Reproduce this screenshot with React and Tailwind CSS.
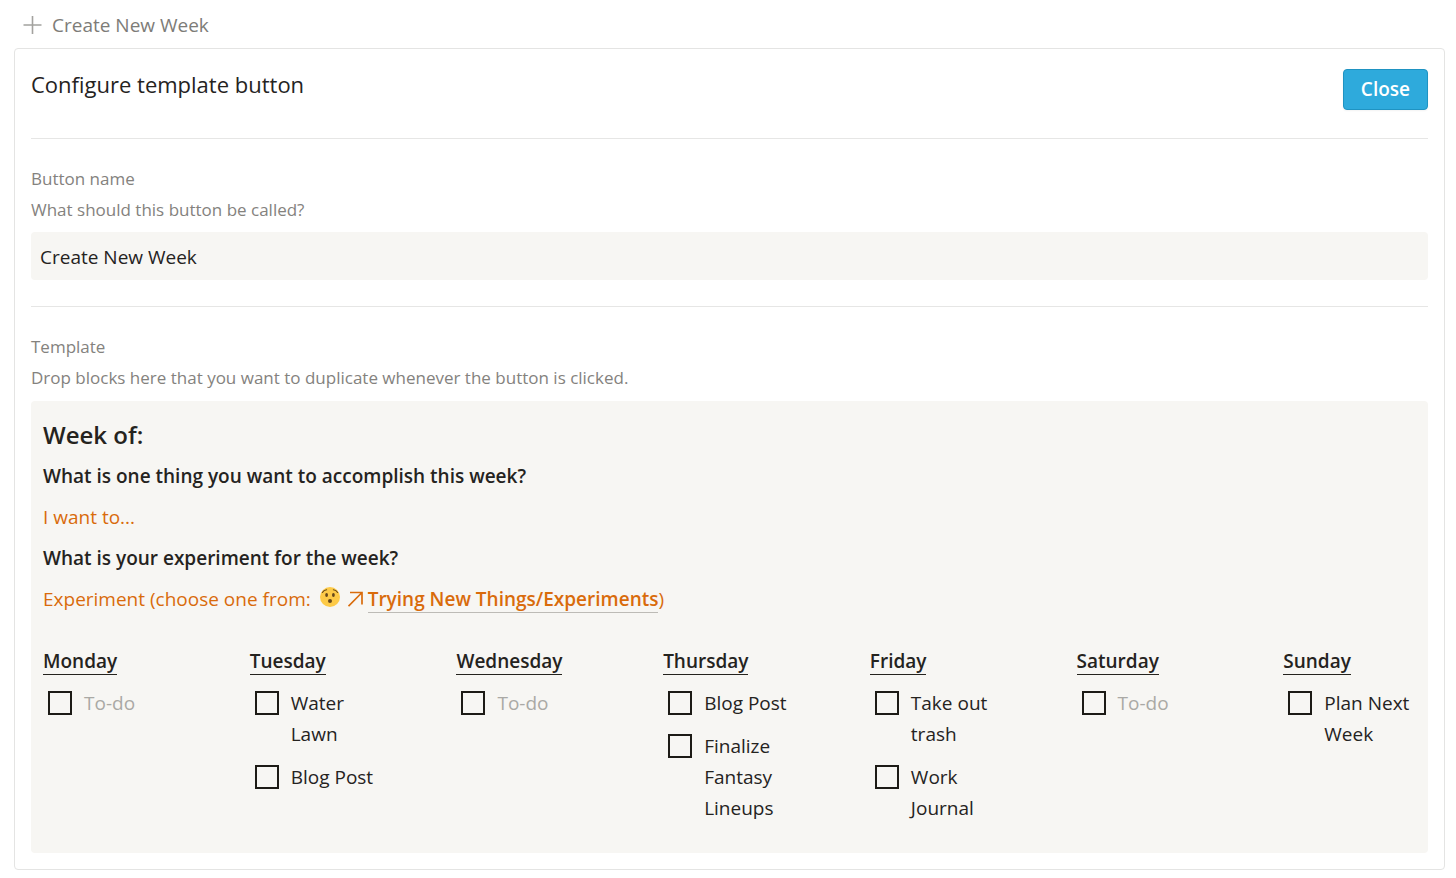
import { useState } from "react";

const days = [
  { name: "Monday", tasks: [""] },
  { name: "Tuesday", tasks: ["Water Lawn", "Blog Post"] },
  { name: "Wednesday", tasks: [""] },
  { name: "Thursday", tasks: ["Blog Post", "Finalize Fantasy Lineups"] },
  { name: "Friday", tasks: ["Take out trash", "Work Journal"] },
  { name: "Saturday", tasks: [""] },
  { name: "Sunday", tasks: ["Plan Next Week"] },
];

function PlusIcon() {
  return (
    <svg className="size-5 shrink-0" viewBox="0 0 20 20" fill="none" stroke="#a3a29f" strokeWidth="1.6" aria-hidden="true">
      <path d="M10.500 1v18M1.500 10h18" />
    </svg>
  );
}

function SurprisedFace() {
  return (
    <svg className="mr-2 mb-2 ml-1 inline-block size-5 align-middle" viewBox="0 0 20 20" aria-hidden="true">
      <circle cx="10" cy="10" r="10" fill="#fdca47" />
      <path d="M2.400 5.400c.9-1.600 2.300-2.500 4.200-2.700M17.600 5.400c-.9-1.600-2.300-2.500-4.200-2.700" fill="none" stroke="#65471b" strokeWidth="1.100" strokeLinecap="round" />
      <ellipse cx="6.600" cy="8" rx="1.400" ry="1.900" fill="#65471b" />
      <ellipse cx="13.400" cy="8" rx="1.400" ry="1.900" fill="#65471b" />
      <ellipse cx="10" cy="14" rx="2" ry="2.100" fill="#65471b" />
    </svg>
  );
}

function ArrowIcon() {
  return (
    <svg className="mr-1 mb-[3px] inline-block size-4 align-middle" viewBox="0 0 16 16" fill="none" stroke="#d96b0b" strokeWidth="1.700" aria-hidden="true">
      <path d="M2 1.500h12v12M14 1.500L0.500 15.200" />
    </svg>
  );
}

function Task({ text }) {
  return (
    <li>
      <label className="flex items-start gap-3 pl-[5px]">
        <input
          type="checkbox"
          className="mt-[3px] size-6 shrink-0 appearance-none border-2 border-[#1d1b16] checked:bg-[#2eaadc]"
        />
        {text ? <span>{text}</span> : <span className="text-[#aaa9a5]">To-do</span>}
      </label>
    </li>
  );
}

export default function App() {
  const [name, setName] = useState("Create New Week");
  return (
    <main className="bg-white pr-[11px] pb-2 pl-[14px] font-['Open_Sans','Noto_Sans',sans-serif] text-[19px] leading-[31px] text-[#25231e]">
      <button type="button" className="flex h-12 w-full items-center gap-[10px] pt-[2px] pl-2 text-left text-[#7d7c78]">
        <PlusIcon />
        {name}
      </button>

      <section className="rounded-[4px] border border-[#e4e4e3] px-4 pb-4">
        <header className="flex items-start justify-between border-b border-[#e6e6e5] pt-5 pb-7">
          <h1 className="text-[22px]">Configure template button</h1>
          <button
            type="button"
            className="h-[41px] rounded-[4px] border border-[#1f93c2] bg-[#2eaadc] px-[17px] font-semibold text-white shadow-xs"
          >
            Close
          </button>
        </header>

        <div className="border-b border-[#e6e6e5] pt-6 pb-[26px]">
          <label htmlFor="button-name" className="block text-[17px] text-[#84827e]">
            Button name
            <span className="block">What should this button be called?</span>
          </label>
          <input
            id="button-name"
            value={name}
            onChange={(e) => setName(e.target.value)}
            className="mt-[7px] block h-12 w-full rounded-[4px] bg-[#f7f6f3] px-[9px] pt-[2px] outline-none"
          />
        </div>

        <div className="pt-6">
          <h2 className="text-[17px] text-[#84827e]">Template</h2>
          <p className="text-[17px] text-[#84827e]">
            Drop blocks here that you want to duplicate whenever the button is clicked.
          </p>

          <div className="mt-2 rounded-[4px] bg-[#f7f6f3] px-3 pt-[18px] pb-[29px]">
            <h3 className="text-[24px] font-semibold">Week of:</h3>
            <div className="mt-[11px] flex flex-col gap-[10px]">
              <p className="font-semibold">What is one thing you want to accomplish this week?</p>
              <p className="text-[#d96b0b]">I want to...</p>
              <p className="font-semibold">What is your experiment for the week?</p>
              <p className="text-[#d96b0b]">
                Experiment (choose one from: <SurprisedFace />
                <ArrowIcon />
                <a href="#experiments" className="border-b border-[#bdbbb6] font-semibold">
                  Trying New Things/Experiments
                </a>
                )
              </p>
            </div>

            <div className="mt-[31px] grid grid-cols-7 gap-x-[74px]">
              {days.map((day) => (
                <section key={day.name}>
                  <h4 className="font-semibold">
                    <span className="border-b border-[#25231e]">{day.name}</span>
                  </h4>
                  <ul className="mt-[11px] flex flex-col gap-3">
                    {day.tasks.map((task, i) => (
                      <Task key={i} text={task} />
                    ))}
                  </ul>
                </section>
              ))}
            </div>
          </div>
        </div>
      </section>
    </main>
  );
}
